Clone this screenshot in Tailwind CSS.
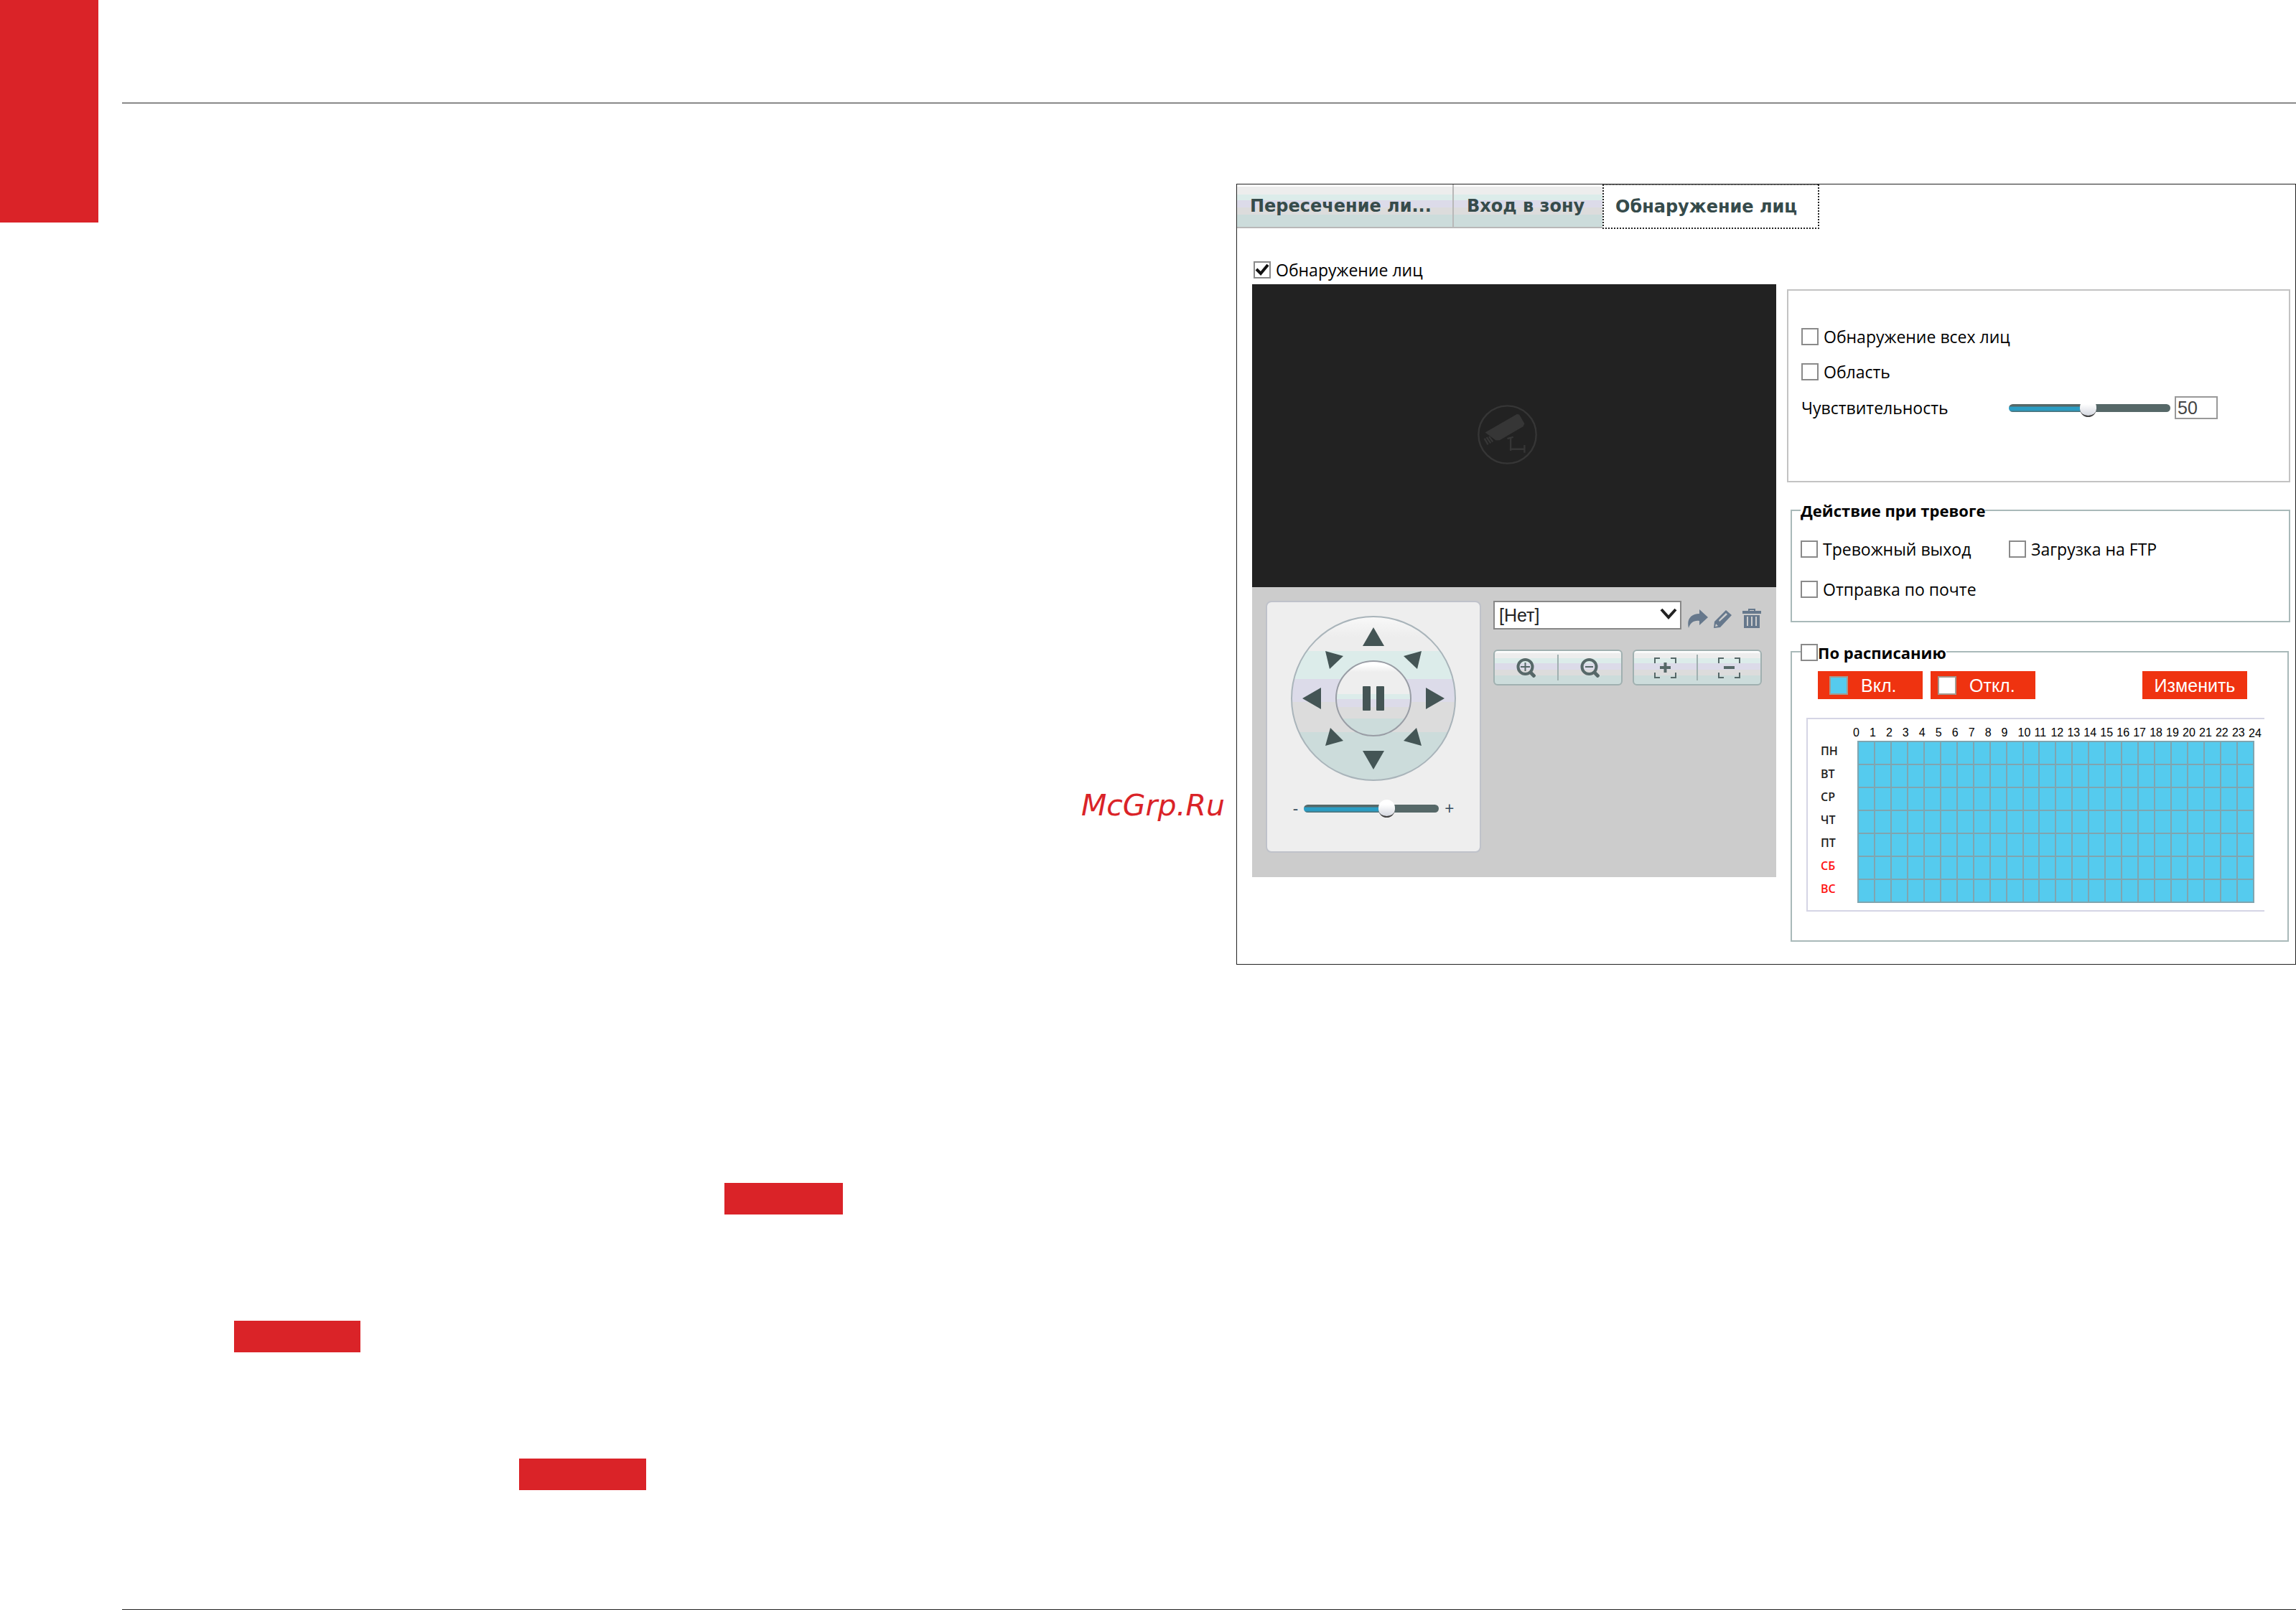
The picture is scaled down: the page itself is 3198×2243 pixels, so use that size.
<!DOCTYPE html>
<html lang="ru">
<head>
  <meta charset="UTF-8" />
  <title>Обнаружение лиц</title>
  <meta name="viewport" content="width=device-width, initial-scale=1" />
  <script src="https://cdn.jsdelivr.net/npm/@tailwindcss/browser@4"></script>
</head>
<body class="bg-white text-black font-['Open_Sans','Noto_Sans',sans-serif] text-[23px] leading-6 min-h-screen flex items-stretch">

  <aside class="w-[137px] h-[310px] shrink-0 bg-[#da2328]"></aside>

  <main class="ml-[33px] flex-1 flex flex-col border-b border-[#222]">
    <header class="h-36 border-b border-[#222]"></header>

    <div class="flex-1 grid grid-cols-[1552fr_1476fr] items-start">

      <!-- left page -->
      <section class="flex flex-col pt-[954px]">
        <a href="#" class="self-end mr-4 h-12 leading-[48px] font-['DejaVu_Sans',sans-serif] italic text-[41px] text-[#da2328]">McGrp.Ru</a>
        <div class="mt-[502px] ml-[839px] w-[165px] h-11 bg-[#da2328]"></div>
        <div class="mt-[148px] ml-[156px] w-[176px] h-11 bg-[#da2328]"></div>
        <div class="mt-[148px] ml-[553px] w-[177px] h-11 bg-[#da2328]"></div>
      </section>

      <!-- settings window -->
      <section class="mt-28 border border-[#222]">
        <nav class="flex items-start font-['DejaVu_Sans',sans-serif] font-bold text-[24px] text-[#364b4b]">
          <button type="button" class="w-[302px] h-[61px] pl-[18px] text-left border-r-2 border-b-2 border-[#b8b8b8] bg-[linear-gradient(#fff_5%,#ededed_5%_23%,#dcecea_23%_38%,#dcdbe9_38%_55%,#dcdcdc_55%_72%,#ccdcdb_72%)]">Пересечение ли...</button>
          <button type="button" class="w-[207px] h-[61px] pl-[18px] text-left whitespace-nowrap border-b-2 border-[#b8b8b8] bg-[linear-gradient(#fff_5%,#ededed_5%_23%,#dcecea_23%_38%,#dcdbe9_38%_55%,#dcdcdc_55%_72%,#ccdcdb_72%)]">Вход в зону</button>
          <button type="button" class="w-[302px] h-[62px] pl-4 text-left border-2 border-t border-dotted border-[#222] bg-white">Обнаружение лиц</button>
        </nav>

        <div class="pt-[45px] pl-[21px] pr-[7px] pb-[31px] flex items-start gap-[15px]">

          <!-- video and PTZ -->
          <div class="w-[730px] shrink-0">
            <label class="ml-[2px] flex items-center gap-[7px] mb-2">
              <span class="grid">
                <input type="checkbox" checked class="appearance-none col-start-1 row-start-1 size-6 border-2 border-[#8a8a8a] bg-white" />
                <svg class="col-start-1 row-start-1 size-6 pointer-events-none" viewBox="0 0 24 24" fill="none" stroke="#111" stroke-width="4"><path d="M4 11 L10 17 L20 5" /></svg>
              </span>
              Обнаружение лиц
            </label>

            <div class="h-[422px] bg-[#222] flex items-center justify-center pr-5 pb-1">
              <svg class="size-[85px]" viewBox="80 68 256 256" fill="none" stroke="#363636" stroke-width="7">
                <circle cx="208" cy="196" r="121" />
                <path d="M115 187 L248 110 L258 112 L280 150 L274 162 L176 219 L160 220 Z" fill="#363636" stroke="none" />
                <path d="M112 212 L127 238 M121 207 L138 232 M131 204 L147 226 M208 213 L233 206 M222 210 L222 264 M218 257 L282 257 M280 240 L280 272" />
              </svg>
            </div>

            <div class="h-[404px] bg-[#ccc] pt-[19px] pl-[19px] flex items-start gap-[17px]">
              <div class="w-[300px] h-[351px] pt-[19px] rounded-lg border-2 border-[#bfc2ca] bg-[#eee] flex flex-col items-center">
                <div class="size-[230px] p-[14px] rounded-full border-2 border-[#a9b4ba] grid grid-cols-3 grid-rows-3 bg-[linear-gradient(#f8f8f8,#ededed_12%_21%,#dcecea_21%_38%,#dcdbe9_38%_52%,#dcdcdc_52%_71%,#ccdcdb_71%)]">
                  <button type="button" aria-label="Вверх-влево" class="place-self-end mr-[9px] mb-2"><svg class="size-[25px]" viewBox="0 0 25 25" fill="#445555"><path d="M0 0 L25 7 L6 25 Z" /></svg></button>
                  <button type="button" aria-label="Вверх" class="justify-self-center self-start"><svg class="w-[30px] h-[26px]" viewBox="0 0 30 26" fill="#445555"><path d="M15 0 L30 26 L0 26 Z" /></svg></button>
                  <button type="button" aria-label="Вверх-вправо" class="justify-self-start self-end ml-[9px] mb-2"><svg class="size-[25px]" viewBox="0 0 25 25" fill="#445555"><path d="M25 0 L0 7 L19 25 Z" /></svg></button>
                  <button type="button" aria-label="Влево" class="justify-self-start self-center"><svg class="w-[26px] h-[30px]" viewBox="0 0 26 30" fill="#445555"><path d="M0 15 L26 0 L26 30 Z" /></svg></button>
                  <button type="button" aria-label="Стоп" class="place-self-center size-[106px] rounded-full border-2 border-[#999da5] flex items-center justify-center bg-[linear-gradient(#fff_4%,#eee_14%_44%,#dcecea_44%_51%,#dcdbe9_51%_62%,#dcdcdc_62%_77%,#ccdcdb_77%)]">
                    <svg class="w-[30px] h-[34px]" viewBox="0 0 30 34" fill="#445555"><rect width="11" height="34" rx="1" /><rect x="19" width="11" height="34" rx="1" /></svg>
                  </button>
                  <button type="button" aria-label="Вправо" class="justify-self-end self-center"><svg class="w-[26px] h-[30px]" viewBox="0 0 26 30" fill="#445555"><path d="M26 15 L0 0 L0 30 Z" /></svg></button>
                  <button type="button" aria-label="Вниз-влево" class="justify-self-end self-start mr-[9px] mt-2"><svg class="size-[25px]" viewBox="0 0 25 25" fill="#445555"><path d="M0 25 L25 18 L7 0 Z" /></svg></button>
                  <button type="button" aria-label="Вниз" class="justify-self-center self-end"><svg class="w-[30px] h-[26px]" viewBox="0 0 30 26" fill="#445555"><path d="M0 0 L30 0 L15 26 Z" /></svg></button>
                  <button type="button" aria-label="Вниз-вправо" class="place-self-start ml-[9px] mt-2"><svg class="size-[25px]" viewBox="0 0 25 25" fill="#445555"><path d="M25 25 L0 18 L18 0 Z" /></svg></button>
                </div>
                <div class="mt-[26px] flex items-center gap-2 text-[#364b5b]">
                  <span>-</span>
                  <input type="range" min="0" max="100" value="63" aria-label="Скорость" class="appearance-none w-[188px] h-[11px] rounded-full bg-[linear-gradient(to_right,transparent_63%,#566868_63%),linear-gradient(#566868_25%,#2a9dc4_40%_75%,#566868)] [&::-webkit-slider-thumb]:appearance-none [&::-webkit-slider-thumb]:w-[23px] [&::-webkit-slider-thumb]:h-[25px] [&::-webkit-slider-thumb]:rounded-full [&::-webkit-slider-thumb]:border-b-2 [&::-webkit-slider-thumb]:border-[#444] [&::-webkit-slider-thumb]:bg-[linear-gradient(#fff_30%,#d5d8e0)]" />
                  <span>+</span>
                </div>
              </div>

              <div class="w-[374px]">
                <div class="flex items-center">
                  <span class="grid">
                    <select aria-label="Предустановка" class="appearance-none col-start-1 row-start-1 w-[262px] h-10 pl-[6px] border-2 border-[#888] bg-white font-['Liberation_Sans',sans-serif] text-[25px] leading-8 text-[#222]">
                      <option>[Нет]</option>
                    </select>
                    <svg class="col-start-1 row-start-1 justify-self-end self-center mr-[6px] mb-1 w-6 h-4 pointer-events-none" viewBox="0 0 24 16" fill="none" stroke="#222" stroke-width="4"><path d="M2 2 L12 13 L22 2" /></svg>
                  </span>
                  <div class="flex items-end mt-2 ml-[9px] text-[#66788c]">
                    <button type="button" aria-label="Перейти"><svg class="w-7 h-[26px]" viewBox="0 0 28 26" fill="currentColor"><path d="M16 0 L28 11 L16 22 V16 C8 15 3 19 1 26 C-2 14 4 6 16 6 Z" /></svg></button>
                    <button type="button" aria-label="Изменить" class="ml-2"><svg class="w-[26px] h-[26px]" viewBox="0 0 26 26" fill="currentColor"><path fill-rule="evenodd" d="M17 1 L25 8 L9 25 L0 26 L1 17 Z M17 5 L7 15 L8 17 L19 7 Z M3 20 L2 24 L6 23 Z" /></svg></button>
                    <button type="button" aria-label="Удалить" class="ml-[14px]"><svg class="w-[26px] h-[27px]" viewBox="0 0 26 27" fill="currentColor"><path fill-rule="evenodd" d="M8 0 H18 V3 H26 V7 H0 V3 H8 Z M10 2 V3 H16 V2 Z M2 9 H24 V27 H2 Z M6 11 V24 H8 V11 Z M12 11 V24 H14 V11 Z M18 11 V24 H20 V11 Z" /></svg></button>
                  </div>
                </div>

                <div class="mt-7 flex gap-[14px]">
                  <div class="w-[180px] h-[50px] py-[5px] flex rounded-md border-2 border-[#a0b0b0] bg-[linear-gradient(#fff_3%,#ededed_8%_21%,#dcecea_21%_36%,#dcdbe9_36%_57%,#dcdcdc_57%_75%,#ccdcdb_75%)]">
                    <button type="button" aria-label="Увеличить" class="flex-1 flex items-center justify-center border-r-2 border-[#a0b0b0]"><svg class="size-[27px]" viewBox="0 0 27 27" fill="none" stroke="#566868" stroke-width="4"><circle cx="12.500" cy="12" r="10" /><path d="M19 19 L26 26" stroke-width="5" /><path d="M6 12 H19 M12.500 6 V18" stroke-width="2" /></svg></button>
                    <button type="button" aria-label="Уменьшить" class="flex-1 flex items-center justify-center"><svg class="size-[27px]" viewBox="0 0 27 27" fill="none" stroke="#566868" stroke-width="4"><circle cx="12.500" cy="12" r="10" /><path d="M19 19 L26 26" stroke-width="5" /><path d="M7 12 H18" stroke-width="2" /></svg></button>
                  </div>
                  <div class="w-[180px] h-[50px] py-[5px] flex rounded-md border-2 border-[#a0b0b0] bg-[linear-gradient(#fff_3%,#ededed_8%_21%,#dcecea_21%_36%,#dcdbe9_36%_57%,#dcdcdc_57%_75%,#ccdcdb_75%)]">
                    <button type="button" aria-label="Фокус +" class="flex-1 flex items-center justify-center border-r-2 border-[#a0b0b0]"><svg class="w-[31px] h-[29px]" viewBox="0 0 31 29" fill="none" stroke="#566868" stroke-width="2"><path d="M1 8 V1 H8 M23 1 H30 V8 M30 21 V28 H23 M8 28 H1 V21" /><path d="M8 14 H23 M15.500 7 V21" stroke-width="4" /></svg></button>
                    <button type="button" aria-label="Фокус -" class="flex-1 flex items-center justify-center"><svg class="w-[31px] h-[29px]" viewBox="0 0 31 29" fill="none" stroke="#566868" stroke-width="2"><path d="M1 8 V1 H8 M23 1 H30 V8 M30 21 V28 H23 M8 28 H1 V21" /><path d="M8 14 H23" stroke-width="4" /></svg></button>
                  </div>
                </div>
              </div>
            </div>
          </div>

          <!-- parameters -->
          <form class="mt-[39px] flex-1">
            <fieldset class="pt-[52px] pb-[86px] pl-[18px] border-2 border-[#c3c3c3]">
              <label class="flex items-center gap-[7px]"><input type="checkbox" class="appearance-none size-6 border-2 border-[#8a8a8a] bg-white" />Обнаружение всех лиц</label>
              <label class="mt-[25px] flex items-center gap-[7px]"><input type="checkbox" class="appearance-none size-6 border-2 border-[#8a8a8a] bg-white" />Область</label>
              <div class="mt-[22px] flex items-center">
                <label for="sensitivity" class="w-[289px]">Чувствительность</label>
                <input id="sensitivity" type="range" min="0" max="100" value="49" class="appearance-none w-[225px] h-[11px] rounded-full bg-[linear-gradient(to_right,transparent_50%,#566868_50%),linear-gradient(#566868_25%,#2a9dc4_40%_75%,#566868)] [&::-webkit-slider-thumb]:appearance-none [&::-webkit-slider-thumb]:w-[23px] [&::-webkit-slider-thumb]:h-[25px] [&::-webkit-slider-thumb]:rounded-full [&::-webkit-slider-thumb]:border-b-2 [&::-webkit-slider-thumb]:border-[#444] [&::-webkit-slider-thumb]:bg-[linear-gradient(#fff_30%,#d5d8e0)]" />
                <input id="sensitivityValue" type="text" value="50" aria-label="Значение чувствительности" class="ml-[6px] w-[60px] h-8 pl-[2px] border-2 border-[#999] font-['Liberation_Sans',sans-serif] text-[25px] text-[#444]" />
              </div>
            </fieldset>

            <fieldset class="mt-[23px] ml-[5px] px-3 pb-8 border-2 border-[#a9b9b9]">
              <legend class="h-8 leading-8 font-bold text-[22px]">Действие при тревоге</legend>
              <div class="pt-[26px] grid grid-cols-[290px_1fr] gap-y-8">
                <label class="flex items-center gap-[7px]"><input type="checkbox" class="appearance-none size-6 border-2 border-[#8a8a8a] bg-white" />Тревожный выход</label>
                <label class="flex items-center gap-[7px]"><input type="checkbox" class="appearance-none size-6 border-2 border-[#8a8a8a] bg-white" />Загрузка на FTP</label>
                <label class="flex items-center gap-[7px]"><input type="checkbox" class="appearance-none size-6 border-2 border-[#8a8a8a] bg-white" />Отправка по почте</label>
              </div>
            </fieldset>

            <fieldset class="mt-[25px] ml-[5px] mr-[2px] px-3 pb-10 border-2 border-[#a9b9b9]">
              <legend class="h-8 font-bold text-[22px]"><label class="h-8 pt-[2px] flex items-center"><input type="checkbox" class="appearance-none size-6 border-2 border-[#8a8a8a] bg-white" />По расписанию</label></legend>
              <div class="mt-[11px] ml-6 mr-11 flex gap-[11px] font-['Liberation_Sans',sans-serif] text-[25px] text-white">
                <button type="button" class="w-[146px] h-[39px] pl-4 flex items-center gap-[18px] bg-[#ef3310]"><span class="size-[26px] border-2 border-[#a39a90] bg-[#55cbee]"></span>Вкл.</button>
                <button type="button" class="w-[146px] h-[39px] pl-[10px] flex items-center gap-[18px] bg-[#ef3310]"><span class="size-[26px] border-2 border-[#a39a90] bg-white"></span>Откл.</button>
                <button type="button" class="ml-auto w-[146px] h-[39px] bg-[#ef3310]">Изменить</button>
              </div>
              <div class="mt-[26px] ml-2 mr-5 pb-[10px] border-2 border-r-0 border-[#d5d5e5]">
                <table class="w-full table-fixed border-collapse text-[16px] leading-5">
                  <thead id="hours" class="font-['Liberation_Sans',sans-serif]"></thead>
                  <tbody id="days"></tbody>
                </table>
              </div>
            </fieldset>
          </form>
        </div>
      </section>
    </div>
  </main>

  <script>
    const days = ['ПН', 'ВТ', 'СР', 'ЧТ', 'ПТ', 'СБ', 'ВС'];

    // each hour label sits just left of the grid line it names
    let head = '<tr class="h-[31px]"><td class="w-[70px]"></td>';
    for (let h = 0; h <= 24; h++) {
      head += `<th scope="col" class="${h === 24 ? 'w-[15px]' : ''} p-0 pb-[1px] align-bottom text-left font-normal"><span class="-ml-[7px]">${h}</span></th>`;
    }
    document.getElementById('hours').innerHTML = head + '</tr>';

    document.getElementById('days').innerHTML = days.map((day, i) =>
      `<tr class="h-8"><th scope="row" class="pl-[18px] pt-[3px] align-top text-left font-semibold ${i > 4 ? 'text-[#f11]' : 'text-[#222]'}">${day}</th>` +
      '<td class="p-0 border-2 border-[#7fa5b0] bg-[#55cbee]"></td>'.repeat(24) + '</tr>'
    ).join('');

    const range = document.getElementById('sensitivity');
    range.oninput = () => {
      document.getElementById('sensitivityValue').value = range.value;
    };
  </script>
</body>
</html>
